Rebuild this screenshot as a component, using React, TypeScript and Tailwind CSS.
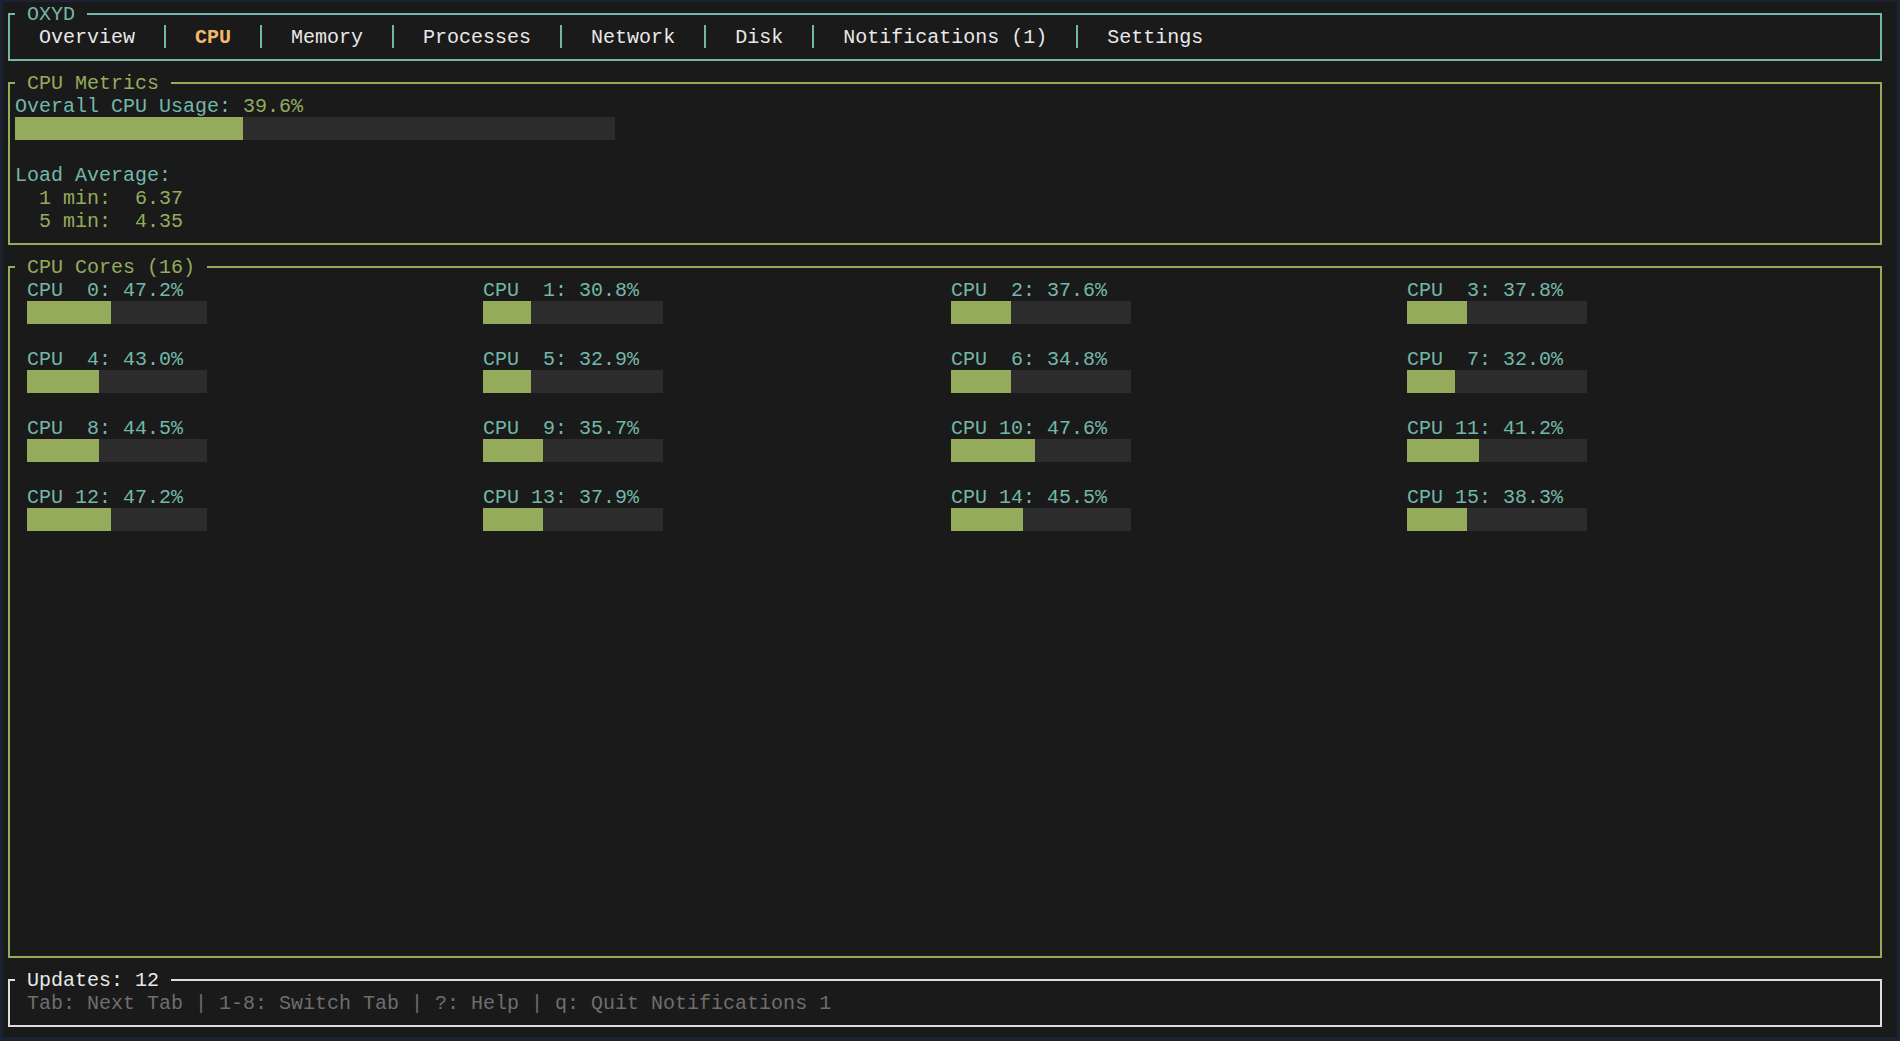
import React from "react";

const cores = [47.2, 30.8, 37.6, 37.8, 43.0, 32.9, 34.8, 32.0, 44.5, 35.7, 47.6, 41.2, 47.2, 37.9, 45.5, 38.3];

function Box({
  title,
  titleClass,
  boxClass,
  children,
}: {
  title: string;
  titleClass: string;
  boxClass: string;
  children: React.ReactNode;
}) {
  return (
    <div className={`relative w-[1874px] border-2 pt-[10.5px] pl-[5px] pr-[5px] ${boxClass}`}>
      <div className={`absolute left-[5px] top-[-12.5px] h-[23px] bg-[#1a1a1a] whitespace-pre ${titleClass}`}>
        {title}
      </div>
      {children}
    </div>
  );
}

function Sep() {
  return (
    <span className="flex h-[23px] w-[12px] justify-center">
      <span className="h-full w-[2px] bg-[#72b8a8]" />
    </span>
  );
}

const tabs = ["Overview", "CPU", "Memory", "Processes", "Network", "Disk", "Notifications (1)", "Settings"];

function Bar({ cols, fill }: { cols: number; fill: number }) {
  return (
    <div className="flex h-[23px] bg-[#2c2c2c]" style={{ width: cols * 12 }}>
      <div className="h-full bg-[#94ab5c]" style={{ width: fill * 12 }} />
    </div>
  );
}

export default function App() {
  return (
    <div className="h-[1041px] w-[1900px] bg-[#1b2231] pl-[3px] pt-[2px] font-['Liberation_Mono','DejaVu_Sans_Mono',monospace] text-[20px] leading-[25px]">
      <div className="flex h-[1035px] w-[1894px] flex-col gap-[21px] bg-[#1a1a1a] pl-[5px] pt-[10.5px]">
        {/* Header */}
        <Box title=" OXYD " titleClass="text-[#72b8a8]" boxClass="h-[48px] border-[#72b8a8]">
          <div className="flex h-[23px] whitespace-pre">
            {tabs.map((t, i) => (
              <React.Fragment key={t}>
                {i > 0 && <Sep />}
                <span className={i === 1 ? "font-bold text-[#f2b86b]" : "text-[#e8e8e8]"}>{`  ${t}  `}</span>
              </React.Fragment>
            ))}
          </div>
        </Box>

        {/* CPU Metrics */}
        <Box title=" CPU Metrics " titleClass="text-[#94ab5c]" boxClass="h-[163px] border-[#94ab5c]">
          <div className="h-[23px] whitespace-pre">
            <span className="text-[#72b8a8]">Overall CPU Usage: </span>
            <span className="text-[#94ab5c]">39.6%</span>
          </div>
          <Bar cols={50} fill={Math.floor((39.6 * 50) / 100)} />
          <div className="h-[23px]" />
          <div className="h-[23px] text-[#72b8a8]">Load Average:</div>
          <div className="h-[23px] whitespace-pre text-[#94ab5c]">{"  1 min:  6.37"}</div>
          <div className="h-[23px] whitespace-pre text-[#94ab5c]">{"  5 min:  4.35"}</div>
        </Box>

        {/* CPU Cores */}
        <Box title=" CPU Cores (16) " titleClass="text-[#94ab5c]" boxClass="h-[692px] border-[#94ab5c]">
          <div className="ml-[12px] grid grid-cols-[456px_468px_456px_456px]">
            {cores.map((v, i) => (
              <div key={i} className="mb-[23px] flex flex-col">
                <div className="h-[23px] whitespace-pre text-[#72b8a8]">
                  {`CPU ${String(i).padStart(2, " ")}: ${v.toFixed(1)}%`}
                </div>
                <Bar cols={15} fill={Math.floor((v * 15) / 100)} />
              </div>
            ))}
          </div>
        </Box>

        {/* Footer */}
        <Box title=" Updates: 12 " titleClass="text-[#e8e8e8]" boxClass="h-[48px] border-[#dedede]">
          <div className="ml-[12px] h-[23px] whitespace-pre text-[#6e6e6e]">
            Tab: Next Tab | 1-8: Switch Tab | ?: Help | q: Quit Notifications 1
          </div>
        </Box>
      </div>
    </div>
  );
}
